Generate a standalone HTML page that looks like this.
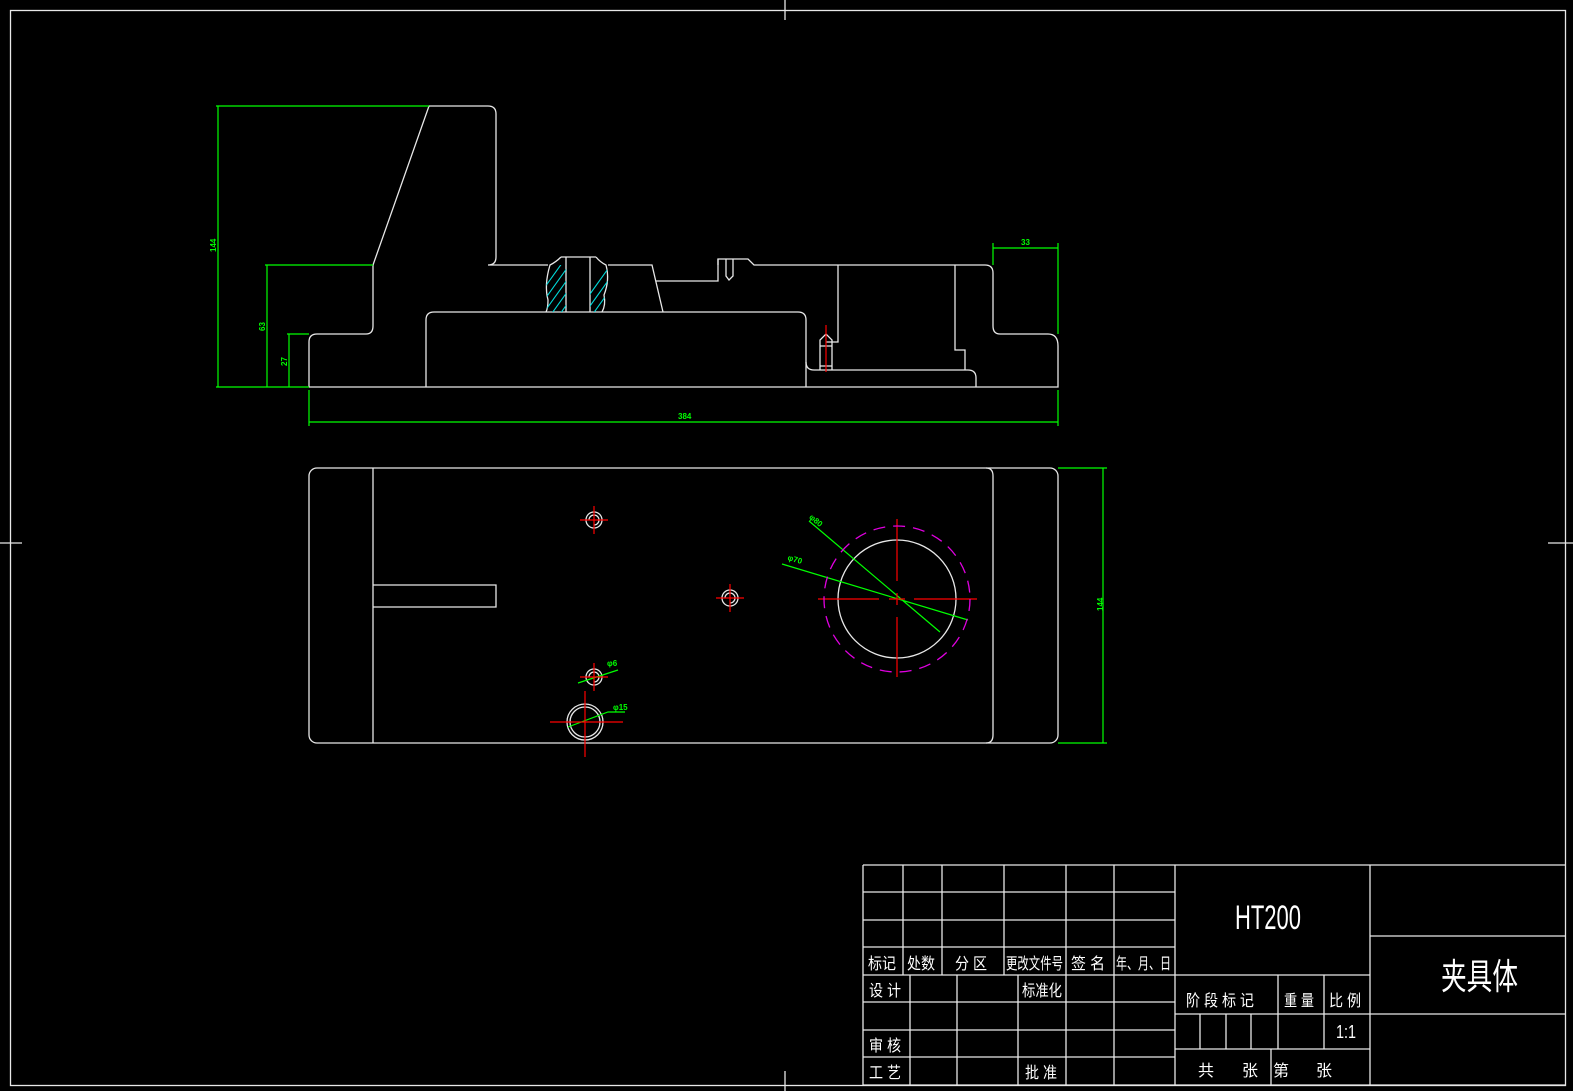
<!DOCTYPE html>
<html><head><meta charset="utf-8"><style>
html,body{margin:0;padding:0;background:#000;width:1573px;height:1091px;overflow:hidden}
svg{display:block}
text{font-family:"Liberation Sans","Noto Sans CJK SC",sans-serif}
</style></head><body>
<svg width="1573" height="1091" viewBox="0 0 1573 1091" xmlns="http://www.w3.org/2000/svg">
<defs>
<clipPath id="hl"><path d="M550,265 Q544,285 548,300 Q548,308 546,312 H566 V265 Z"/></clipPath>
<clipPath id="hr"><path d="M590,265 H606 Q610,280 604,295 Q606,305 602,312 H590 Z"/></clipPath>
</defs>
<g fill="none" stroke="#e8e8e8" stroke-width="1.3">
<rect x="10.5" y="10.5" width="1555" height="1075"/>
<line x1="785" y1="0" x2="785" y2="20"/><line x1="785" y1="1071" x2="785" y2="1091"/>
<line x1="0" y1="543" x2="22" y2="543"/><line x1="1548" y1="543" x2="1573" y2="543"/>
<path d="M309,387 H1058 V346 Q1058,334 1048,334 H1000 Q993,334 993,326 V273 Q993,265 985,265 H754 L748,259 H718 V281 H656"/>
<path d="M309,387 V342 Q309,334 317,334 H366 Q373,334 373,326 V265 L429,106 H488 Q496,106 496,114 V257 Q496,265 488,265 H548"/>
<path d="M608,265 H652 L663,312"/>
<path d="M561,257 H596 M566,257 V312 M590,257 V312"/>
<path d="M561,257 Q556,262 550,265 Q544,285 548,300 Q548,308 546,312"/>
<path d="M596,257 Q600,262 606,265 Q610,280 604,295 Q606,305 602,312"/>
<path d="M426,387 V320 Q426,312 434,312 H798 Q806,312 806,320 V387"/>
<path d="M806,362 Q806,370 814,370 H968 Q976,370 976,378 V387"/>
<path d="M838,265 V342 H826"/>
<path d="M955,265 V350 H965 V370"/>
<path d="M718,259 V265 M726,259 V276 L729,280 L733,276 V259"/>
<path d="M820,370 V340 L826,334 L832,340 V370 M820,346 H832 M820,366 H832"/>
<rect x="309" y="468" width="749" height="275" rx="8"/>
<path d="M373,468 V743 M986,468 Q993,468 993,476 V735 Q993,743 986,743"/>
<path d="M373,585 H496 V607 H373"/>
<circle cx="897" cy="599" r="59"/>
<circle cx="594" cy="520" r="8"/><path d="M589,520 A5,5 0 1 1 594,525"/>
<circle cx="730" cy="598" r="8"/><path d="M725,598 A5,5 0 1 1 730,603"/>
<circle cx="594" cy="677" r="8"/><path d="M589,677 A5,5 0 1 1 594,682"/>
<circle cx="585" cy="722" r="18"/><circle cx="585" cy="722" r="15"/>
</g>
<g stroke="#00d8d8" stroke-width="1.1">
<g clip-path="url(#hl)"><path d="M530,320 L580,250 M530,308 L580,238 M530,332 L580,262 M530,344 L580,274 M530,356 L580,286 M530,368 L580,298"/></g>
<g clip-path="url(#hr)"><path d="M580,320 L630,250 M580,308 L630,238 M580,332 L630,262 M580,344 L630,274 M580,356 L630,286 M580,368 L630,298"/></g>
</g>
<g stroke="#00ff00" stroke-width="1.2" fill="none">
<path d="M216,106 H429 M218,106 V387 M216,387 H309 M265,265 H373 M267,265 V387 M287,334 H309 M289,334 V387"/>
<path d="M309,390 V426 M1058,390 V426 M309,422 H1058"/>
<path d="M993,243 V265 M1058,243 V334 M993,248 H1058"/>
<path d="M1058,468 H1107 M1058,743 H1107 M1103,468 V743"/>
<path d="M809,521 L940,632 M782,564 L968,620"/>
<path d="M578,683 L618,670 M568,727 L608,712 H625"/>
</g>
<g fill="#00ff00" font-size="8" font-weight="bold">
<text x="208" y="250" transform="rotate(-90 213 247)">144</text>
<text x="258" y="330" transform="rotate(-90 262 327)">63</text>
<text x="280" y="365" transform="rotate(-90 284 362)">27</text>
<text x="678" y="419">384</text>
<text x="1021" y="245">33</text>
<text x="1094" y="612" transform="rotate(-90 1098 607)">144</text>
<text x="810" y="522" transform="rotate(40 815 518)">φ80</text>
<text x="788" y="562" transform="rotate(16 795 558)">φ70</text>
<text x="607" y="666">φ6</text>
<text x="613" y="710">φ15</text>
</g>
<g stroke="#ff0000" stroke-width="1.2">
<path d="M580,520 H608 M594,506 V534"/>
<path d="M716,598 H744 M730,584 V612"/>
<path d="M580,677 H608 M594,663 V691"/>
<path d="M550,722 H623 M585,691 V757"/>
<path d="M818,599 H879 M889,599 H905 M914,599 H977 M897,519 V581 M897,593 V605 M897,617 V677"/>
<path d="M826,325 V372"/>
</g>
<circle cx="897" cy="599" r="73" fill="none" stroke="#e000e0" stroke-width="1.3" stroke-dasharray="12,8"/>
<g stroke="#e8e8e8" stroke-width="1.3" fill="none">
<path d="M863,865 H1566 M863,865 V1085 H1566 M1175,865 V1085 M1370,865 V1085"/>
<path d="M863,892 H1175 M863,920 H1175 M863,947 H1175 M863,975 H1175 M863,1002 H1175 M863,1030 H1175 M863,1057 H1175"/>
<path d="M903,865 V975 M942,865 V975 M1004,865 V975 M1066,865 V975 M1114,865 V1085"/>
<path d="M910,975 V1085 M957,975 V1085 M1018,975 V1085 M1066,975 V1085"/>
<path d="M1370,936 H1566 M1370,1014 H1566"/>
<path d="M1175,975 H1370 M1175,1014 H1370 M1175,1049 H1370"/>
<path d="M1278,975 V1049 M1324,975 V1049 M1200,1014 V1049 M1226,1014 V1049 M1251,1014 V1049 M1271,1049 V1085"/>
</g>
<g fill="#fff" font-size="16" font-family="'Liberation Sans','Noto Sans CJK SC',sans-serif">
<text x="868" y="969" textLength="28" lengthAdjust="spacingAndGlyphs">标记</text>
<text x="907" y="969" textLength="28" lengthAdjust="spacingAndGlyphs">处数</text>
<text x="955" y="969" textLength="32" lengthAdjust="spacingAndGlyphs">分 区</text>
<text x="1006" y="969" textLength="57" lengthAdjust="spacingAndGlyphs">更改文件号</text>
<text x="1071" y="969" textLength="34" lengthAdjust="spacingAndGlyphs">签 名</text>
<text x="1116" y="969" textLength="55" lengthAdjust="spacingAndGlyphs">年、月、日</text>
<text x="869" y="996" textLength="32" lengthAdjust="spacingAndGlyphs">设 计</text>
<text x="1022" y="996" textLength="40" lengthAdjust="spacingAndGlyphs">标准化</text>
<text x="869" y="1051" textLength="32" lengthAdjust="spacingAndGlyphs">审 核</text>
<text x="869" y="1078" textLength="32" lengthAdjust="spacingAndGlyphs">工 艺</text>
<text x="1025" y="1078" textLength="32" lengthAdjust="spacingAndGlyphs">批 准</text>
<text x="1186" y="1006" textLength="68" lengthAdjust="spacingAndGlyphs">阶 段 标 记</text>
<text x="1284" y="1006" textLength="30" lengthAdjust="spacingAndGlyphs">重 量</text>
<text x="1329" y="1006" textLength="32" lengthAdjust="spacingAndGlyphs">比 例</text>
<text x="1336" y="1038" font-family="'Liberation Serif',serif" font-size="18" textLength="20" lengthAdjust="spacingAndGlyphs">1:1</text>
<text x="1198" y="1076">共</text><text x="1242" y="1076">张</text><text x="1273" y="1076">第</text><text x="1316" y="1076">张</text>
<text x="1235" y="929" font-family="'Liberation Serif',serif" font-size="34" textLength="66" lengthAdjust="spacingAndGlyphs">HT200</text>
<text x="1441" y="989" font-size="36" textLength="77" lengthAdjust="spacingAndGlyphs">夹具体</text>
</g>
</svg>
</body></html>
